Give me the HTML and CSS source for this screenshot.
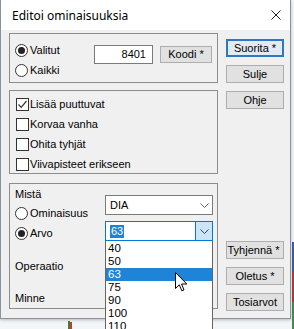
FILE: index.html
```html
<!DOCTYPE html>
<html>
<head>
<meta charset="utf-8">
<link rel="stylesheet" href="styles.css">
</head>
<body>
<div class="desk-bit bit-a"></div>
<div class="desk-bit bit-b"></div>
<div class="desk-bit bit-c"></div>
<div class="desk-bit bit-d"></div>
<div class="desk-bit bit-e"></div>
<div class="window">
  <div class="titlebar">
    <span class="title">Editoi ominaisuuksia</span>
    <svg class="close" width="10" height="10" viewBox="0 0 10 10"><path d="M0.5 0.5 L9.5 9.5 M9.5 0.5 L0.5 9.5" stroke="#222" stroke-width="1" fill="none"/></svg>
  </div>
  <div class="main">
    <div class="leftcol">
      <div class="group g1">
        <div class="radios">
          <div class="opt"><span class="radio on"></span><span>Valitut</span></div>
          <div class="opt"><span class="radio"></span><span>Kaikki</span></div>
        </div>
        <div class="textbox">8401</div>
        <div class="btn koodi">Koodi *</div>
      </div>
      <div class="group g2">
        <div class="opt chk-row"><span class="check on"><svg width="11" height="11" viewBox="0 0 11 11"><path d="M1.5 5.5 L4.2 8.3 L9.5 2" stroke="#333" stroke-width="1.2" fill="none"/></svg></span><span>Lisää puuttuvat</span></div>
        <div class="opt chk-row"><span class="check"></span><span>Korvaa vanha</span></div>
        <div class="opt chk-row"><span class="check"></span><span>Ohita tyhjät</span></div>
        <div class="opt chk-row"><span class="check"></span><span>Viivapisteet erikseen</span></div>
      </div>
      <div class="group g3">
        <div class="labels">
          <div class="opt l-mista">Mistä</div>
          <div class="opt l-omin"><span class="radio"></span><span>Ominaisuus</span></div>
          <div class="opt l-arvo"><span class="radio on"></span><span>Arvo</span></div>
          <div class="opt l-oper">Operaatio</div>
          <div class="opt l-minne">Minne</div>
        </div>
        <div class="combos">
          <div class="combo c-dia">
            <span class="ctext">DIA</span>
            <span class="cbtn"><svg width="9" height="5" viewBox="0 0 9 5"><path d="M0.5 0.5 L4.5 4.5 L8.5 0.5" stroke="#666" fill="none"/></svg></span>
          </div>
          <div class="combo-wrap">
            <div class="combo c-arvo">
              <span class="ctext"><span class="sel">63</span></span>
              <span class="cbtn open"><svg width="9" height="5" viewBox="0 0 9 5"><path d="M0.5 0.5 L4.5 4.5 L8.5 0.5" stroke="#444" fill="none"/></svg></span>
            </div>
            <div class="droplist">
              <div class="item">40</div>
              <div class="item">50</div>
              <div class="item hl">63</div>
              <div class="item">75</div>
              <div class="item">90</div>
              <div class="item">100</div>
              <div class="item">110</div>
            </div>
          </div>
        </div>
      </div>
    </div>
    <div class="rightcol">
      <div class="btn def">Suorita *</div>
      <div class="btn">Sulje</div>
      <div class="btn">Ohje</div>
      <div class="btn tyh">Tyhjennä *</div>
      <div class="btn">Oletus *</div>
      <div class="btn">Tosiarvot</div>
    </div>
  </div>
</div>
<svg class="cursor" width="13" height="21" viewBox="0 0 13 21"><path d="M0.5 0.5 L0.5 16.5 L4.3 12.8 L6.8 18.8 L9 17.9 L6.6 12 L11.8 12 Z" fill="#fff" stroke="#000" stroke-width="1" stroke-linejoin="miter"/></svg>
</body>
</html>
```
FILE: styles.css
```css
html, body {
  margin: 0;
  padding: 0;
}
body {
  width: 294px;
  height: 329px;
  position: relative;
  overflow: hidden;
  background: #f3f6f9;
  font-family: "Liberation Sans", Arial, sans-serif;
  font-size: 11px;
  color: #000;
}
.window {
  width: 289px;
  height: 318px;
  background: #f0f0f0;
  border: 1px solid #8a939c;
  border-top: 0;
  box-shadow: 0 1px 3px rgba(0,0,0,0.25);
  position: relative;
}
.titlebar {
  height: 30px;
  background: #fff;
  display: flex;
  align-items: center;
  justify-content: space-between;
  padding-left: 11px;
  padding-right: 9px;
}
.title {
  font-family: "Noto Sans", "Open Sans", sans-serif;
  font-size: 12px;
  padding-top: 1px;
}
.main {
  display: flex;
  padding-left: 8px;
}
.leftcol {
  width: 209px;
  display: flex;
  flex-direction: column;
}
.group {
  box-sizing: border-box;
  border: 1px solid #8c8c8c;
}
.g1 {
  margin-top: 3px;
  height: 50px;
  display: flex;
  align-items: flex-start;
  padding: 6px 0 0 5px;
}
.radios {
  width: 79px;
  display: flex;
  flex-direction: column;
}
.opt {
  height: 20px;
  display: flex;
  align-items: center;
  gap: 2px;
  white-space: nowrap;
}
.radio {
  box-sizing: border-box;
  width: 13px;
  height: 13px;
  border-radius: 50%;
  border: 1px solid #333;
  background: #fff;
  display: flex;
  align-items: center;
  justify-content: center;
}
.radio.on::after {
  content: "";
  width: 7px;
  height: 7px;
  border-radius: 50%;
  background: #222;
}
.textbox {
  box-sizing: border-box;
  margin-top: 5px;
  width: 59px;
  height: 19px;
  background: #fff;
  border: 1px solid #7a7a7a;
  text-align: right;
  padding-right: 6px;
  line-height: 17px;
}
.btn {
  box-sizing: border-box;
  height: 18px;
  background: #e1e1e1;
  border: 1px solid #adadad;
  text-align: center;
  line-height: 16px;
  white-space: nowrap;
}
.koodi {
  margin-left: 7px;
  margin-top: 6px;
  width: 52px;
  height: 17px;
  line-height: 15px;
}
.g2 {
  margin-top: 7px;
  height: 84px;
  padding: 4px 0 0 6px;
  display: flex;
  flex-direction: column;
  gap: 2px;
}
.chk-row {
  height: 18px;
  gap: 1px;
}
.check {
  box-sizing: border-box;
  width: 13px;
  height: 13px;
  border: 1px solid #333;
  background: #fff;
  display: flex;
  align-items: center;
  justify-content: center;
}
.g3 {
  margin-top: 9px;
  height: 126px;
  padding-left: 5px;
  display: flex;
}
.labels {
  width: 90px;
  display: flex;
  flex-direction: column;
}
.labels .opt { height: 18px; }
.l-mista { margin-top: 1px; }
.l-omin { margin-top: 1px; }
.l-arvo { margin-top: 2px; }
.l-oper { margin-top: 15px; }
.l-minne { margin-top: 14px; }
.combos {
  width: 108px;
  display: flex;
  flex-direction: column;
}
.combo {
  box-sizing: border-box;
  height: 20px;
  background: #fff;
  border: 1px solid #7a7a7a;
  display: flex;
  align-items: stretch;
}
.c-dia { margin-top: 11px; }
.combo-wrap {
  position: relative;
  margin-top: 6px;
}
.c-arvo { border-color: #0078d7; }
.ctext {
  flex: 1;
  padding-left: 4px;
  display: flex;
  align-items: center;
}
.cbtn {
  width: 16px;
  display: flex;
  align-items: center;
  justify-content: center;
}
.cbtn.open {
  background: #cce4f7;
  border-left: 1px solid #0078d7;
}
.sel {
  background: #1e84d8;
  color: #fff;
  line-height: 13px;
  padding: 0 1px;
}
.droplist {
  position: absolute;
  left: 0;
  top: 100%;
  width: 108px;
  box-sizing: border-box;
  background: #fff;
  border: 1px solid #646464;
  border-top: 0;
  padding-top: 1px;
  z-index: 5;
}
.item {
  height: 13px;
  line-height: 13px;
  padding-left: 2px;
  font-size: 11.5px;
}
.item.hl {
  background: #1e84d8;
  color: #fff;
}
.rightcol {
  width: 58px;
  margin-left: 8px;
  display: flex;
  flex-direction: column;
  gap: 8px;
  padding-top: 9px;
}
.btn.def {
  border: 2px solid #2b79c2;
  background: #e3eaf1;
  line-height: 14px;
}
.btn.tyh {
  margin-top: 124px;
  overflow: visible;
  text-indent: -3px;
}
.cursor {
  position: absolute;
  left: 175px;
  top: 272px;
  z-index: 10;
}
.desk-bit {
  position: absolute;
}
.bit-a { left: 68px; top: 321px; width: 2px; height: 8px; background: #4c7a2c; }
.bit-b { left: 70px; top: 322px; width: 2px; height: 7px; background: #c33a2b; }
.bit-c { left: 292px; top: 242px; width: 2px; height: 30px; background: #3a5ea8; }
.bit-d { left: 292px; top: 272px; width: 2px; height: 30px; background: #b23a3a; }
.bit-e { left: 292px; top: 302px; width: 2px; height: 27px; background: #3f8f4a; }
```
